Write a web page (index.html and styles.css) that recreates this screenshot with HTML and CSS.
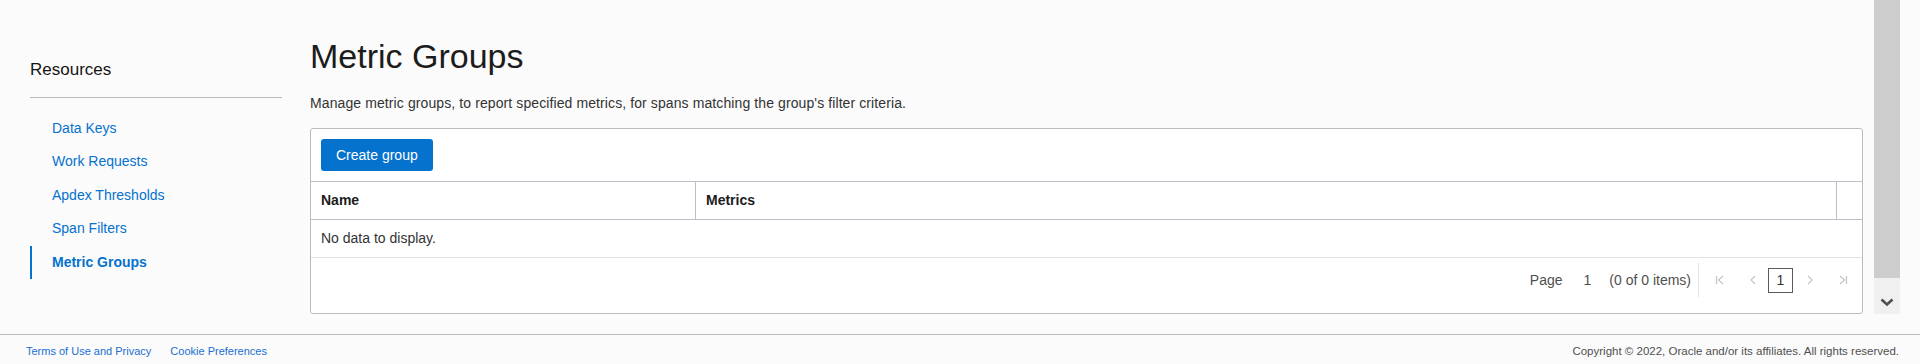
FILE: index.html
```html
<!DOCTYPE html>
<html lang="en">
<head>
<meta charset="utf-8">
<title>Metric Groups</title>
<link rel="stylesheet" href="styles.css">
</head>
<body>
<div class="layout">
  <aside class="sidebar">
    <h2 class="res-title">Resources</h2>
    <ul class="nav">
      <li class="nav-item"><a href="#">Data Keys</a></li>
      <li class="nav-item"><a href="#">Work Requests</a></li>
      <li class="nav-item"><a href="#">Apdex Thresholds</a></li>
      <li class="nav-item"><a href="#">Span Filters</a></li>
      <li class="nav-item active"><a href="#">Metric Groups</a></li>
    </ul>
  </aside>
  <main class="main">
    <h1 class="title">Metric Groups</h1>
    <p class="desc">Manage metric groups, to report specified metrics, for spans matching the group's filter criteria.</p>
    <section class="panel">
      <div class="toolbar">
        <button class="btn-primary" type="button">Create group</button>
      </div>
      <div class="thead">
        <div class="th">Name</div>
        <div class="th">Metrics</div>
        <div class="th th-last"></div>
      </div>
      <div class="empty-row">No data to display.</div>
      <div class="pager">
        <span class="pg-label">Page</span>
        <span class="pg-num">1</span>
        <span class="pg-count">(0 of 0 items)</span>
        <span class="pg-sep"></span>
        <span class="pg-btn pg-first">
          <svg width="10" height="10" viewBox="0 0 10 10"><path d="M1.5 1v8M8 1L3.5 5 8 9" fill="none" stroke="#c6c6c6" stroke-width="1.3"/></svg>
        </span>
        <span class="pg-btn pg-prev">
          <svg width="8" height="10" viewBox="0 0 8 10"><path d="M6 1L2 5l4 4" fill="none" stroke="#c6c6c6" stroke-width="1.3"/></svg>
        </span>
        <span class="pg-box">1</span>
        <span class="pg-btn pg-next">
          <svg width="8" height="10" viewBox="0 0 8 10"><path d="M2 1l4 4-4 4" fill="none" stroke="#c6c6c6" stroke-width="1.3"/></svg>
        </span>
        <span class="pg-btn pg-last">
          <svg width="10" height="10" viewBox="0 0 10 10"><path d="M2 1l4.5 4L2 9M8.5 1v8" fill="none" stroke="#c6c6c6" stroke-width="1.3"/></svg>
        </span>
      </div>
    </section>
  </main>
  <div class="scrollbar">
    <div class="sb-thumb"></div>
    <div class="sb-arrow">
      <svg width="14" height="9" viewBox="0 0 14 9"><path d="M1.5 1.5L7 6.5l5.5-5" fill="none" stroke="#505050" stroke-width="2.6"/></svg>
    </div>
  </div>
</div>
<footer class="footer">
  <div class="footer-links">
    <a href="#">Terms of Use and Privacy</a>
    <a href="#">Cookie Preferences</a>
  </div>
  <div class="copyright">Copyright © 2022, Oracle and/or its affiliates. All rights reserved.</div>
</footer>
</body>
</html>
```
FILE: styles.css
```css
* { box-sizing: border-box; }
html, body { margin: 0; padding: 0; }
body {
  background: #fbfbfb;
  font-family: "Liberation Sans", Arial, sans-serif;
  color: #161513;
  width: 1920px;
  height: 364px;
  overflow: hidden;
}
a { text-decoration: none; }

.layout {
  display: flex;
  align-items: flex-start;
  height: 334px;
  padding-left: 30px;
  padding-right: 20px;
}

/* sidebar */
.sidebar {
  width: 252px;
  margin-right: 28px;
  padding-top: 60px;
}
.res-title {
  margin: 0;
  font-size: 17px;
  line-height: 20px;
  font-weight: normal;
  color: #161513;
  padding-bottom: 17px;
  border-bottom: 1px solid #b7bbc1;
}
.nav {
  list-style: none;
  margin: 13.5px 0 0;
  padding: 0;
}
.nav-item {
  height: 33.5px;
  line-height: 33.5px;
  font-size: 14px;
  padding-left: 22px;
}
.nav-item a { color: #0572ce; }
.nav-item.active {
  border-left: 2px solid #0572ce;
  padding-left: 20px;
  font-weight: bold;
}

/* main */
.main {
  flex: 1;
  min-width: 0;
  margin-right: 11px;
  padding-top: 36px;
}
.title {
  margin: 0;
  font-size: 34px;
  line-height: 40px;
  font-weight: normal;
  color: #1c1c1c;
}
.desc {
  margin: 17px 0 0;
  font-size: 14px;
  line-height: 20px;
  letter-spacing: 0.1px;
  color: #333;
}
.panel {
  margin-top: 15px;
  background: #fff;
  border: 1px solid #b9bdc2;
  border-radius: 3px;
}
.toolbar {
  padding: 10px;
  border-bottom: 1px solid #b9bfc6;
}
.btn-primary {
  display: block;
  height: 32px;
  padding: 0 15px;
  border: 0;
  border-radius: 3px;
  background: #0572ce;
  color: #fff;
  font-family: "Liberation Sans", Arial, sans-serif;
  font-size: 14px;
  cursor: pointer;
}
.thead {
  display: grid;
  grid-template-columns: 385px 1fr 25px;
  height: 38px;
  border-bottom: 1px solid #b9bfc6;
}
.th {
  padding-left: 10px;
  line-height: 37px;
  font-size: 14px;
  font-weight: bold;
  color: #1c1c1c;
  border-right: 1px solid #b9bfc6;
}
.th-last { border-right: 0; }
.empty-row {
  height: 38px;
  line-height: 37px;
  padding-left: 10px;
  font-size: 14px;
  color: #333;
  border-bottom: 1px solid #e0e3e6;
}
.pager {
  display: flex;
  justify-content: flex-end;
  align-items: center;
  height: 55px;
  padding: 5px 7px 16px 0;
  font-size: 14px;
  color: #4f4f4f;
}
.pg-num { margin-left: 21px; }
.pg-count { margin-left: 18px; }
.pg-sep {
  width: 1px;
  height: 34px;
  background: #e2e2e2;
  margin-left: 7px;
}
.pg-btn {
  width: 25px;
  height: 25px;
  display: flex;
  align-items: center;
  justify-content: center;
}
.pg-first { margin-left: 8px; }
.pg-prev { margin-left: 8px; }
.pg-box {
  width: 25px;
  height: 25px;
  margin-left: 3px;
  border: 1px solid #5b5b5b;
  display: flex;
  align-items: center;
  justify-content: center;
  color: #333;
}
.pg-next { margin-left: 4px; }
.pg-last { margin-left: 8px; }

/* scrollbar */
.scrollbar {
  width: 26px;
  height: 314px;
  display: flex;
  flex-direction: column;
}
.sb-thumb {
  height: 278px;
  background: #cdcdcd;
}
.sb-arrow {
  flex: 1;
  background: #f0f0f0;
  display: flex;
  align-items: center;
  justify-content: center;
  padding-top: 12px;
}

/* footer */
.footer {
  height: 30px;
  border-top: 1px solid #b7babf;
  display: flex;
  justify-content: space-between;
  align-items: center;
  padding: 2px 21px 0 26px;
  font-size: 11px;
}
.footer-links { display: flex; gap: 19px; }
.footer-links a { color: #1a6fcf; }
.copyright { color: #4f4f4f; font-size: 11.5px; }
```
